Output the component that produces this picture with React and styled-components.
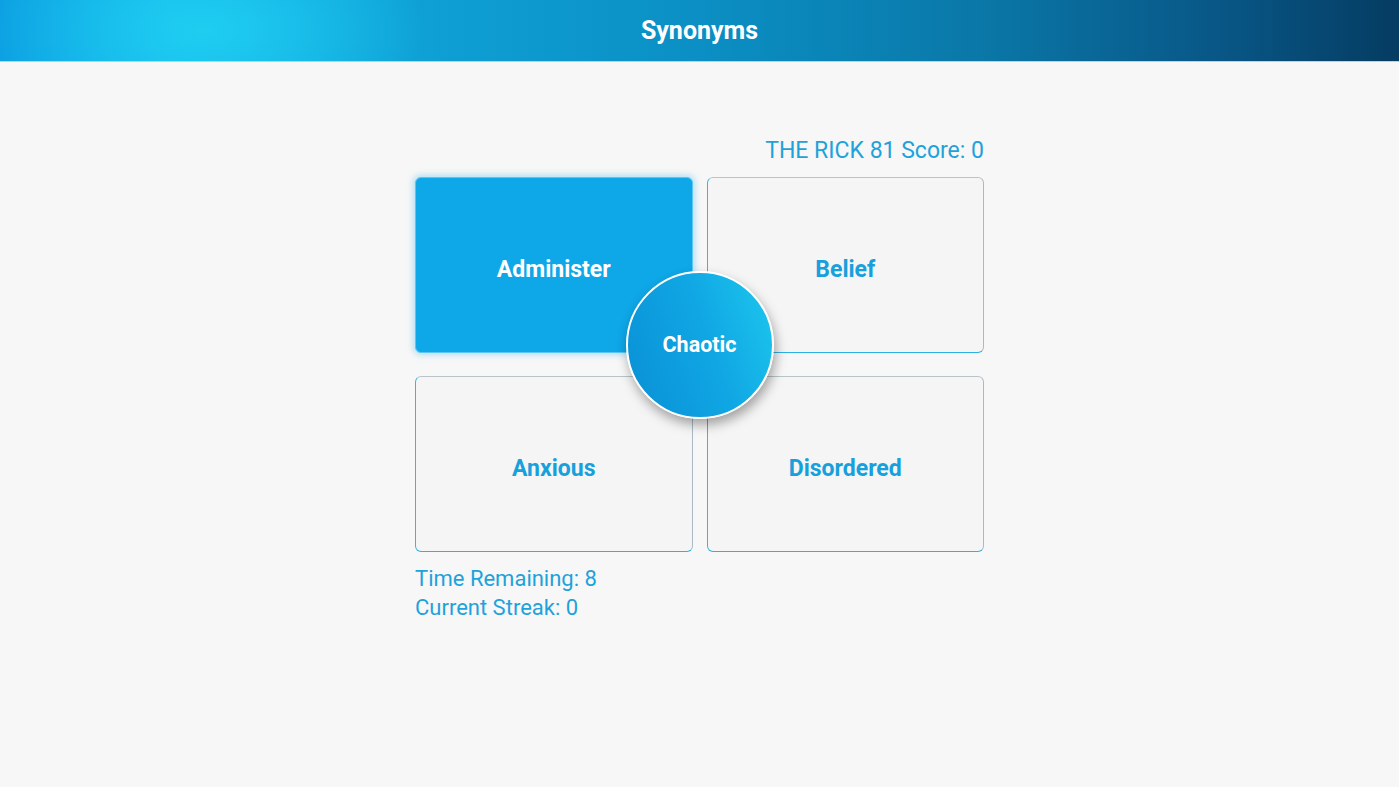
import styled, { createGlobalStyle } from "styled-components";

const GlobalStyle = createGlobalStyle`
  html, body {
    margin: 0;
    padding: 0;
    background: #f7f7f7;
    font-family: Roboto, "Liberation Sans", Arial, sans-serif;
  }
`;

const words = [
  { label: "Administer", selected: true },
  { label: "Belief" },
  { label: "Anxious" },
  { label: "Disordered" },
];

const App = () => {
  return (
    <Page>
      <GlobalStyle />
      <Header>
        <Title>Synonyms</Title>
      </Header>
      <Main>
        <Board>
          <Score>THE RICK 81 Score: 0</Score>
          <Grid>
            {words.map((w) => (
              <Card key={w.label} selected={w.selected}>
                {w.label}
              </Card>
            ))}
            <Target>Chaotic</Target>
          </Grid>
          <Stats>
            <div>Time Remaining: 8</div>
            <div>Current Streak: 0</div>
          </Stats>
        </Board>
      </Main>
    </Page>
  );
};

const Page = styled.div`
  min-height: 787px;
  background: #f7f7f7;
`;

const Header = styled.header`
  height: 61px;
  display: flex;
  align-items: center;
  justify-content: center;
  border-bottom: 1px solid #8fe3f7;
  background:
    radial-gradient(ellipse 220px 120px at 205px 50%, rgba(32, 208, 242, 0.9), rgba(32, 208, 242, 0) 100%),
    linear-gradient(
      90deg,
      #0c9fe2 0%,
      #14b6ea 12%,
      #0e9ed3 32%,
      #0b8fc4 50%,
      #0a78a8 70%,
      #085584 88%,
      #053c62 100%
    );
`;

const Title = styled.h1`
  margin: 0;
  color: #fff;
  font-size: 25px;
  font-weight: 700;
`;

const Main = styled.main`
  display: flex;
  justify-content: center;
  padding-top: 75px;
`;

const Board = styled.div`
  width: 569px;
  display: flex;
  flex-direction: column;
`;

const Score = styled.div`
  align-self: flex-end;
  color: #1ea2da;
  font-size: 23px;
  line-height: 28px;
  margin-bottom: 12px;
`;

const Grid = styled.div`
  position: relative;
  display: grid;
  grid-template-columns: 1fr 1fr;
  column-gap: 14px;
  row-gap: 23px;
`;

const Card = styled.div`
  height: 176px;
  box-sizing: border-box;
  padding-top: 8px;
  border-radius: 6px;
  display: flex;
  align-items: center;
  justify-content: center;
  font-size: 23px;
  font-weight: 700;
  color: ${(p) => (p.selected ? "#fff" : "#17a0db")};
  background: ${(p) => (p.selected ? "#0ea7e8" : "#f5f5f5")};
  border: 1px solid;
  border-color: ${(p) =>
    p.selected ? "#5cc6f0" : "#b8c3ca #a9bac6 #2db2e4 #39b5e3"};
  box-shadow: ${(p) =>
    p.selected ? "0 0 6px 2px rgba(120, 200, 240, 0.55)" : "none"};
`;

const Target = styled.div`
  position: absolute;
  left: 50%;
  top: calc(50% - 20px);
  width: 148px;
  height: 148px;
  transform: translate(-50%, -50%);
  box-sizing: border-box;
  border-radius: 50%;
  border: 2px solid #ffffff;
  background: linear-gradient(70deg, #0990d5 0%, #10a6e4 55%, #1dc8ee 100%);
  box-shadow: 2px 6px 12px rgba(0, 0, 0, 0.35);
  display: flex;
  align-items: center;
  justify-content: center;
  color: #fff;
  font-size: 21.5px;
  font-weight: 700;
`;

const Stats = styled.div`
  margin-top: 12px;
  color: #1ea2da;
  font-size: 22px;
  line-height: 29px;
`;

export default App;
